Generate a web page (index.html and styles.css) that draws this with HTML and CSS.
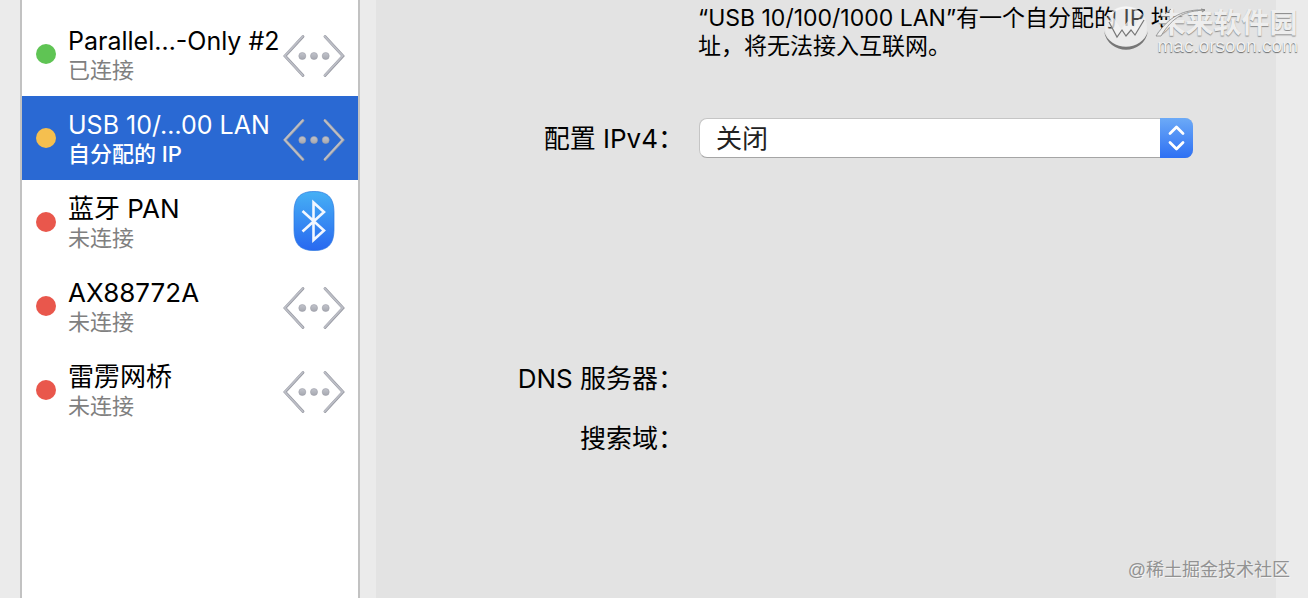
FILE: index.html
```html
<!DOCTYPE html>
<html lang="zh-CN">
<head>
<meta charset="utf-8">
<title>网络</title>
<link rel="stylesheet" href="styles.css">
</head>
<body>
<svg class="defs" aria-hidden="true">
  <defs>
    <linearGradient id="metal" x1="0" y1="0" x2="0" y2="1">
      <stop offset="0" stop-color="#c2c4cc"/><stop offset="1" stop-color="#a6a8b0"/>
    </linearGradient>
    <linearGradient id="blue" x1="0" y1="0" x2="0" y2="1">
      <stop offset="0" stop-color="#46b0f5"/><stop offset="1" stop-color="#2868f0"/>
    </linearGradient>
    <symbol id="ethernet" viewBox="0 0 64 44">
      <g fill="none" stroke-linecap="round" stroke-linejoin="miter">
        <path d="M21 2.500L3 22L21 41.500M43 2.500L61 22L43 41.500" stroke="#9799a2" stroke-width="2.800"/>
        <path d="M20.700 2.300L2.700 21.800L20.700 41.300M42.700 2.300L60.700 21.800L42.700 41.300" stroke="#bcbec6" stroke-width="1.800"/>
      </g>
      <g fill="url(#metal)" stroke="#9c9ea7" stroke-width=".6">
        <circle cx="20.300" cy="22" r="3.500"/><circle cx="32" cy="22" r="3.500"/><circle cx="43.700" cy="22" r="3.500"/>
      </g>
    </symbol>
  </defs>
</svg>
<div class="window">
  <nav class="sidebar">
    <ul class="services">
      <li><button class="service" type="button">
        <span class="dot green"></span>
        <span class="info"><span class="name truncated">Parallel…-Only #2</span><span class="state">已连接</span></span>
        <svg class="ethernet" aria-hidden="true"><use href="#ethernet"/></svg>
      </button></li>
      <li><button class="service selected" type="button" aria-current="true">
        <span class="dot amber"></span>
        <span class="info"><span class="name truncated">USB 10/…00 LAN</span><span class="state">自分配的 IP</span></span>
        <svg class="ethernet" aria-hidden="true"><use href="#ethernet"/></svg>
      </button></li>
      <li><button class="service" type="button">
        <span class="dot red"></span>
        <span class="info"><span class="name">蓝牙 PAN</span><span class="state">未连接</span></span>
        <svg class="bluetooth" viewBox="0 0 42 60" aria-hidden="true">
          <path d="M21 .5C36 .5 41 8 41 22V38C41 52 36 59.500 21 59.500S1 52 1 38V22C1 8 6 .5 21 .5Z" fill="url(#blue)" stroke="#2d79df" stroke-width=".7"/>
          <path d="M9.500 20L31 39.500L20.500 49V11.500L31 21L9.500 40.500" fill="none" stroke="#f2f7ff" stroke-width="2.600"/>
        </svg>
      </button></li>
      <li><button class="service" type="button">
        <span class="dot red"></span>
        <span class="info"><span class="name">AX88772A</span><span class="state">未连接</span></span>
        <svg class="ethernet" aria-hidden="true"><use href="#ethernet"/></svg>
      </button></li>
      <li><button class="service" type="button">
        <span class="dot red"></span>
        <span class="info"><span class="name">雷雳网桥</span><span class="state">未连接</span></span>
        <svg class="ethernet" aria-hidden="true"><use href="#ethernet"/></svg>
      </button></li>
    </ul>
  </nav>
  <main class="panel">
    <p class="message">“USB 10/100/1000 LAN”有一个自分配的 IP 地址，将无法接入互联网。</p>
    <div class="field">
      <label class="label" for="ipv4">配置 IPv4：</label>
      <div class="popup">
        <select id="ipv4"><option>关闭</option></select>
        <svg class="arrows" viewBox="0 0 33 40" aria-hidden="true">
          <path d="M10 15.500L16.500 9L23 15.500M10 24.500L16.500 31L23 24.500" fill="none" stroke="#fff" stroke-width="2.800" stroke-linecap="round" stroke-linejoin="round"/>
        </svg>
      </div>
    </div>
    <dl class="details">
      <dt class="label">DNS 服务器：</dt><dd></dd>
      <dt class="label">搜索域：</dt><dd></dd>
    </dl>
  </main>
</div>
<div class="site-mark">
  <svg class="site-logo" viewBox="0 0 48 50" aria-hidden="true">
    <circle cx="24" cy="25" r="21" fill="#fff" fill-opacity=".28"/>
    <path d="M8 13A21 21 0 0 1 40 13" fill="none" stroke="#fff" stroke-opacity=".6" stroke-width="2"/>
    <path d="M6 19L15 35L20 28L24 34L29 27L33 33L42 18L37 17L32 26L27 18L19 27L12 16Z" fill="#f4f4f4" fill-opacity=".7"/>
    <path d="M7 20L15 35L20 28L24 34L29 28L33 33L42 18" fill="none" stroke="#777" stroke-width="1.200"/>
    <path d="M2 29C6 54 42 54 46 29C40 50 8 50 2 29Z" fill="#777"/>
  </svg>
  <div class="site-text">
    <span class="site-name">未来软件园</span>
    <span class="site-url">mac.orsoon.com</span>
  </div>
  <svg class="swoosh" viewBox="0 0 56 32" aria-hidden="true">
    <path d="M1 29H6C18 9 30 4 50 3C29 2 14 9 1 29Z" fill="#eee" stroke="#888" stroke-width=".8"/>
    <path d="M10 7L16 2M46 2L50 3L47 5" fill="none" stroke="#888"/>
  </svg>
</div>
<div class="community-mark">@稀土掘金技术社区</div>
</body>
</html>
```
FILE: styles.css
```css
* { box-sizing: border-box; }
body {
  margin: 0;
  background: #ebebeb;
  color: #000;
  font-family: Inter, "Noto Sans CJK SC", sans-serif;
}
.defs { position: absolute; width: 0; height: 0; }
.window {
  display: grid;
  grid-template-columns: 340px minmax(0, 1fr);
  gap: 16px;
  min-height: 100vh;
  padding: 0 32px 0 20px;
}
.sidebar {
  background: #fff;
  border: solid #c2c2c2;
  border-width: 0 2px;
}
.services { list-style: none; margin: 0; padding: 12px 0 0; }
.service {
  display: grid;
  grid-template-columns: 20px minmax(0, 1fr) 64px;
  align-items: center;
  width: 100%;
  height: 84px;
  padding: 0 12px 0 14px;
  border: 0;
  background: none;
  color: #000;
  font: inherit;
  text-align: left;
}
.selected { background: #2a69d3; color: #fff; }
.dot { width: 20px; height: 20px; border-radius: 50%; }
.green { background: #5fc454; }
.amber { background: #f5bf4f; }
.red { background: #e9574c; }
.info { display: flex; flex-direction: column; padding: 2px 0 0 12px; white-space: nowrap; }
.name { font-size: 26px; line-height: 30px; }
.truncated { font-size: 25px; }
.state { font-size: 22px; line-height: 28px; color: #808080; }
.selected .state { color: #fff; font-weight: 500; }
.ethernet { width: 64px; height: 44px; margin-top: 3px; }
.bluetooth { width: 42px; height: 60px; margin-bottom: 2px; justify-self: center; }
.panel { background: #e3e3e3; padding: 4px 83px 0 112px; }
.message { margin: 0 0 58px 210px; max-width: 482px; font-size: 23px; line-height: 28px; }
.field, .details { display: grid; grid-template-columns: 196px minmax(0, 1fr); column-gap: 15px; }
.field { align-items: center; }
.label { padding-top: 2px; font-size: 26px; line-height: 38px; text-align: right; white-space: nowrap; }
.popup { display: grid; }
.popup select {
  grid-area: 1 / 1;
  appearance: none;
  width: 100%;
  height: 40px;
  padding: 0 48px 0 16px;
  border: 1px solid #c5c5c5;
  border-bottom-color: #a5a5a5;
  border-radius: 8px;
  background: #fff;
  color: #222;
  font: inherit;
  font-size: 26px;
}
.arrows {
  grid-area: 1 / 1;
  justify-self: end;
  width: 33px;
  height: 40px;
  border-radius: 0 8px 8px 0;
  background: linear-gradient(#6caaf7, #2e70f3);
  pointer-events: none;
}
.details { margin: 200px 0 0; row-gap: 20px; }
.details dd { margin: 0; }
.site-mark { position: absolute; top: 2px; right: 10px; display: flex; gap: 8px; }
.site-logo { width: 48px; height: 50px; }
.site-text { display: flex; flex-direction: column; padding-top: 7px; }
.site-name {
  color: #eee;
  font-size: 28px;
  line-height: 28px;
  font-weight: 700;
  text-shadow: 0 1px 1px #888;
}
.site-url {
  color: #f0f0f0;
  font-family: "Liberation Sans", sans-serif;
  font-size: 19px;
  line-height: 18px;
  text-shadow: 0 1px 1px #666;
}
.swoosh { position: absolute; left: 53px; top: 5px; width: 56px; height: 32px; }
.community-mark {
  position: absolute;
  right: 18px;
  bottom: 15px;
  color: #929292;
  font-family: "Liberation Sans", "Noto Sans CJK SC", sans-serif;
  font-size: 18px;
  line-height: 26px;
  text-shadow: 1px 1px 0 #f4f4f4;
}
```
